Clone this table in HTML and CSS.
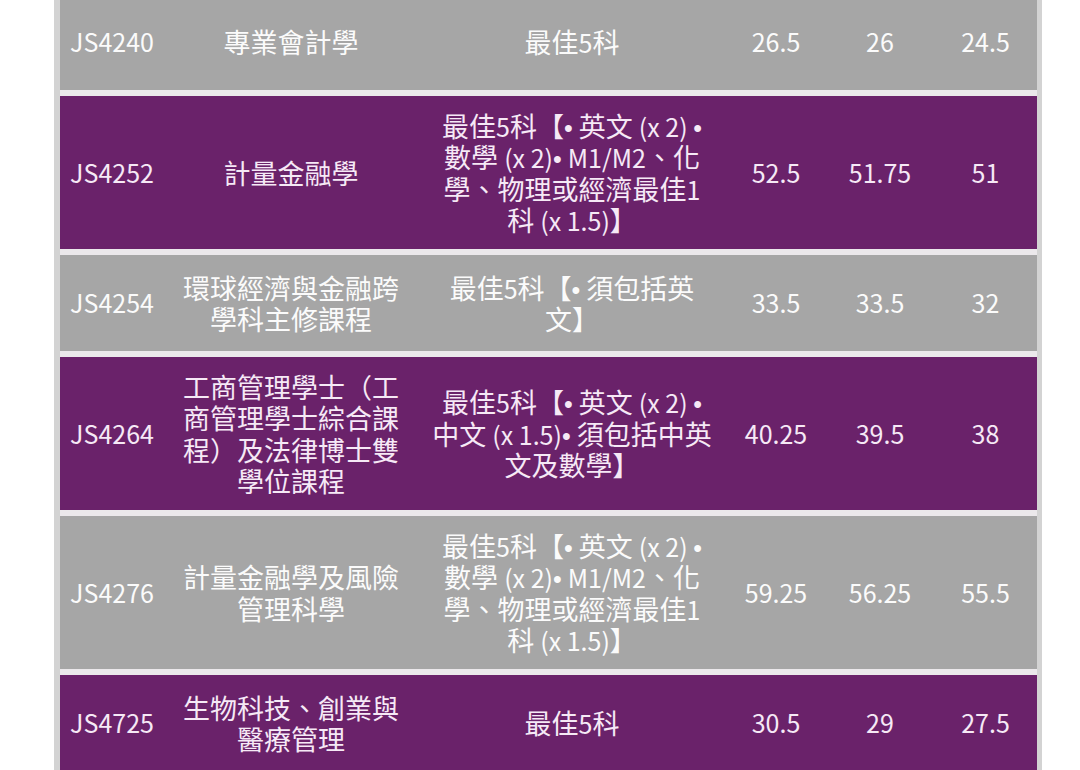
FILE: index.html
```html
<!DOCTYPE html>
<html lang="zh-Hant">
<head>
<meta charset="utf-8">
<title>JUPAS 收生分數</title>
<link rel="stylesheet" href="styles.css">
</head>
<body>
<div class="table">
  <div class="row grey">
    <div class="cell num">JS4240</div>
    <div class="cell">專業會計學</div>
    <div class="cell">最佳<span class="en">5</span>科</div>
    <div class="cell num">26.5</div>
    <div class="cell num">26</div>
    <div class="cell num">24.5</div>
  </div>
  <div class="row purple">
    <div class="cell num">JS4252</div>
    <div class="cell">計量金融學</div>
    <div class="cell nw">最佳<span class="en">5</span>科【<span class="b">•</span> 英文 <span class="en">(x 2) </span><span class="b">•</span><br>數學 <span class="en">(x 2)</span><span class="b">•</span> <span class="en">M1/M2</span>、化<br>學、物理或經濟最佳<span class="en">1</span><br>科 <span class="en">(x 1.5)</span>】</div>
    <div class="cell num">52.5</div>
    <div class="cell num">51.75</div>
    <div class="cell num">51</div>
  </div>
  <div class="row grey">
    <div class="cell num">JS4254</div>
    <div class="cell nw">環球經濟與金融跨<br>學科主修課程</div>
    <div class="cell nw">最佳<span class="en">5</span>科【<span class="b">•</span> 須包括英<br>文】</div>
    <div class="cell num">33.5</div>
    <div class="cell num">33.5</div>
    <div class="cell num">32</div>
  </div>
  <div class="row purple">
    <div class="cell num">JS4264</div>
    <div class="cell nw">工商管理學士（工<br>商管理學士綜合課<br>程）及法律博士雙<br>學位課程</div>
    <div class="cell nw">最佳<span class="en">5</span>科【<span class="b">•</span> 英文 <span class="en">(x 2) </span><span class="b">•</span><br>中文 <span class="en">(x 1.5)</span><span class="b">•</span> 須包括中英<br>文及數學】</div>
    <div class="cell num">40.25</div>
    <div class="cell num">39.5</div>
    <div class="cell num">38</div>
  </div>
  <div class="row grey">
    <div class="cell num">JS4276</div>
    <div class="cell nw">計量金融學及風險<br>管理科學</div>
    <div class="cell nw">最佳<span class="en">5</span>科【<span class="b">•</span> 英文 <span class="en">(x 2) </span><span class="b">•</span><br>數學 <span class="en">(x 2)</span><span class="b">•</span> <span class="en">M1/M2</span>、化<br>學、物理或經濟最佳<span class="en">1</span><br>科 <span class="en">(x 1.5)</span>】</div>
    <div class="cell num">59.25</div>
    <div class="cell num">56.25</div>
    <div class="cell num">55.5</div>
  </div>
  <div class="row purple">
    <div class="cell num">JS4725</div>
    <div class="cell nw">生物科技、創業與<br>醫療管理</div>
    <div class="cell">最佳<span class="en">5</span>科</div>
    <div class="cell num">30.5</div>
    <div class="cell num">29</div>
    <div class="cell num">27.5</div>
  </div>
</div>
</body>
</html>
```

FILE: styles.css
```css
html, body {
  margin: 0;
  padding: 0;
  background: #ffffff;
}

body {
  font-family: "Noto Sans CJK TC", "Noto Sans", sans-serif;
  font-size: 27px;
  overflow: hidden;
}

.table {
  margin: -6px 0 0 54px;
  width: 977px;
  border-left: 6px solid #d3d3d3;
  border-right: 5px solid #d3d3d3;
  background: #ebe8eb;
  display: flex;
  flex-direction: column;
  gap: 6px;
}

.row {
  display: grid;
  grid-template-columns: 104px 254px 308px 100px 108px 103px;
  align-items: center;
  min-height: 96px;
  box-sizing: border-box;
  padding: 13.5px 0;
}

.grey {
  background: #a6a6a6;
  color: #fbfbfb;
}

.purple {
  background: #6a226a;
  color: #f6e9f6;
}

.cell {
  text-align: center;
  line-height: 31.5px;
}

.num {
  font-size: 25px;
}

.nw {
  white-space: nowrap;
}

.en {
  font-size: 25px;
  line-height: 1;
}

.b {
  font-family: "Liberation Sans", sans-serif;
  font-size: 25px;
  line-height: 1;
}
```
